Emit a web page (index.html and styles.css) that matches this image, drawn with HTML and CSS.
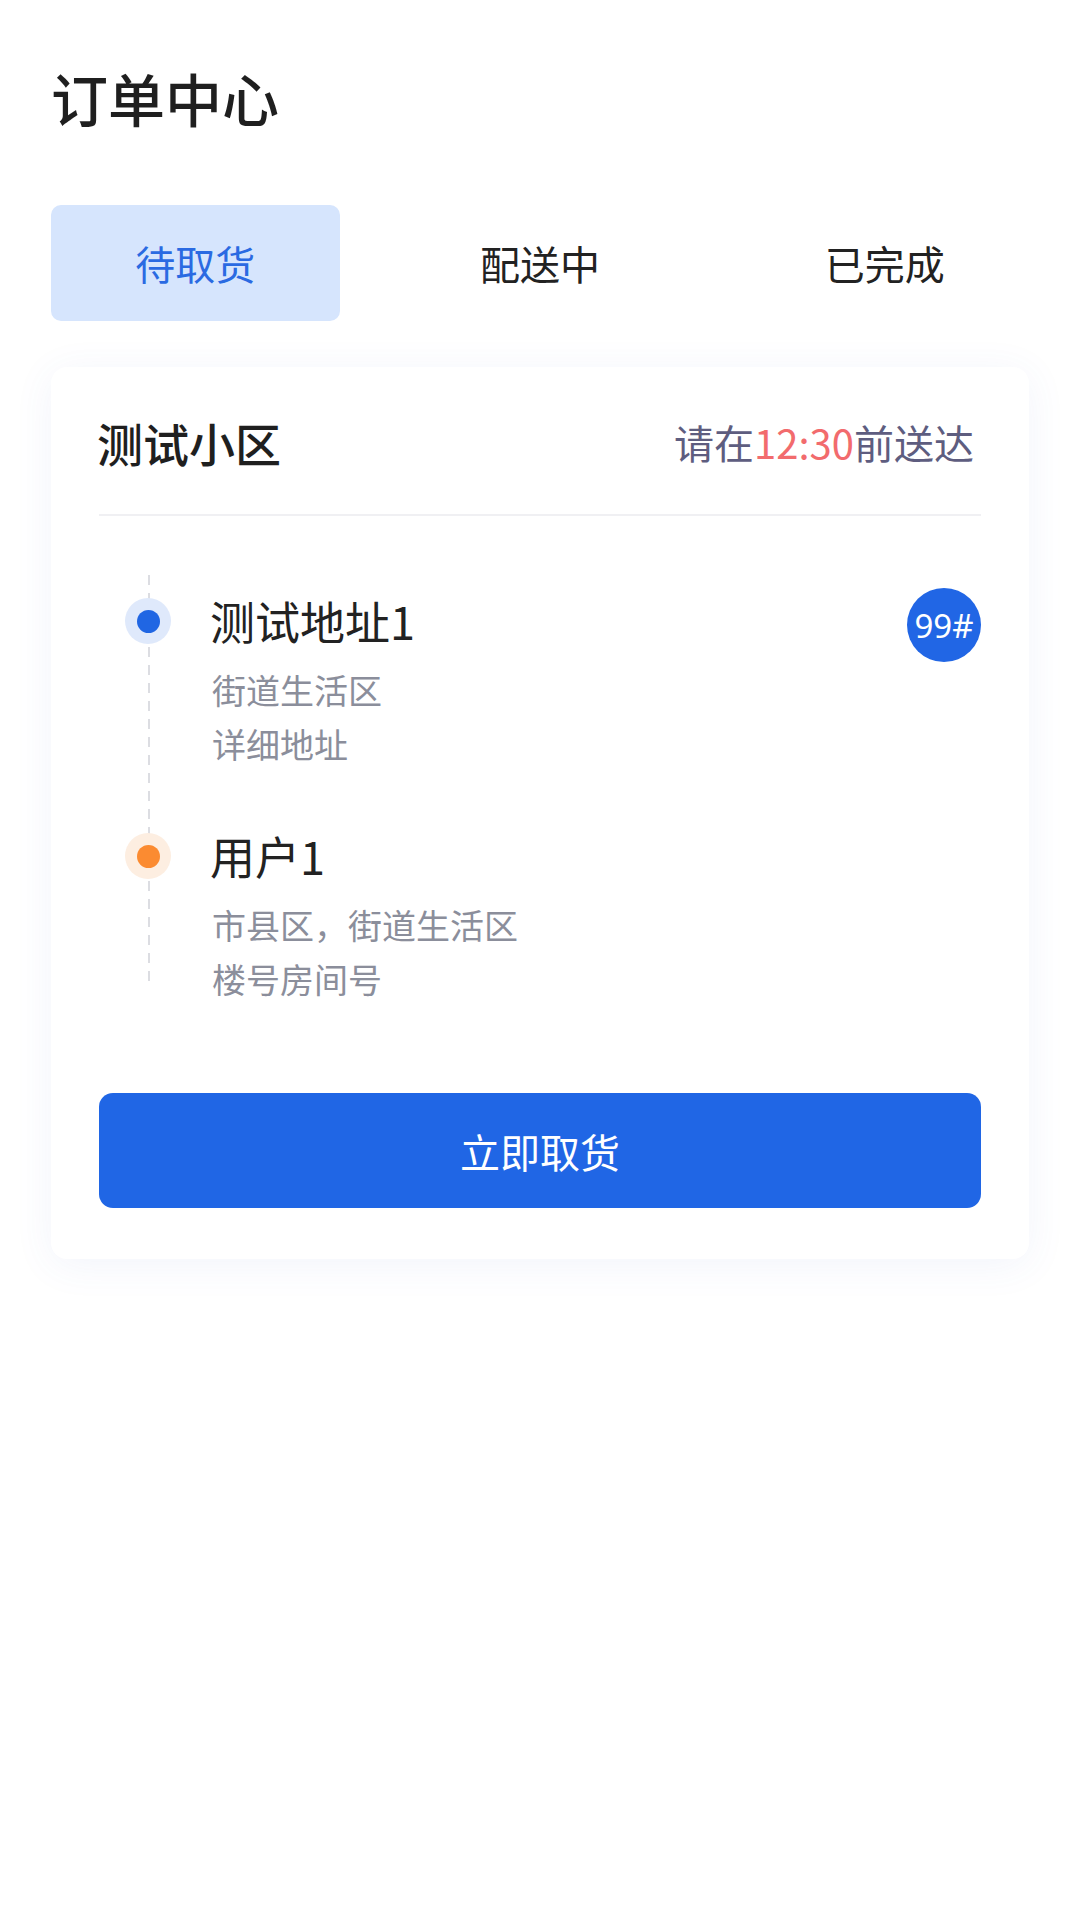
FILE: index.html
```html
<!DOCTYPE html>
<html lang="zh-CN">
<head>
<meta charset="utf-8">
<title>订单中心</title>
<link rel="stylesheet" href="styles.css">
</head>
<body>
<div class="page">
  <h1 class="page-title">订单中心</h1>
  <div class="tabs">
    <div class="tab tab-active">待取货</div>
    <div class="tab">配送中</div>
    <div class="tab">已完成</div>
  </div>
  <div class="card">
    <div class="card-head">
      <div class="card-name">测试小区</div>
      <div class="card-deadline">请在<span class="deadline-time">12:30</span>前送达</div>
    </div>
    <div class="timeline">
      <div class="stop">
        <div class="dot dot-blue"><span></span></div>
        <div class="stop-body">
          <div class="stop-title">测试地址1</div>
          <div class="stop-sub">街道生活区</div>
          <div class="stop-sub">详细地址</div>
        </div>
        <div class="badge">99#</div>
      </div>
      <div class="stop">
        <div class="dot dot-orange"><span></span></div>
        <div class="stop-body">
          <div class="stop-title">用户1</div>
          <div class="stop-sub">市县区，街道生活区</div>
          <div class="stop-sub">楼号房间号</div>
        </div>
      </div>
    </div>
    <button class="action">立即取货</button>
  </div>
</div>
</body>
</html>
```

FILE: styles.css
```css
* { box-sizing: border-box; }
html, body { margin: 0; padding: 0; background: #ffffff; }
body {
  font-family: "Noto Sans CJK SC", "Noto Sans", sans-serif;
  color: #222222;
}
.page {
  width: 1080px;
  min-height: 1920px;
  padding: 57px 51px 0 51px;
}
.page-title {
  margin: 0;
  font-size: 57px;
  line-height: 80px;
  font-weight: 500;
  color: #1f1f1f;
}
.tabs {
  margin-top: 68px;
  display: grid;
  grid-template-columns: repeat(3, 1fr);
  column-gap: 56px;
}
.tab {
  height: 116px;
  display: flex;
  align-items: center;
  justify-content: center;
  font-size: 40px;
  color: #222222;
  border-radius: 10px;
}
.tab-active {
  background: #d6e5fd;
  color: #2a6ae2;
}
.card {
  margin-top: 46px;
  background: #ffffff;
  border-radius: 16px;
  box-shadow: 0 6px 40px rgba(70, 100, 200, 0.07);
  padding: 0 48px 51px 48px;
}
.card-head {
  display: flex;
  justify-content: space-between;
  align-items: center;
  height: 149px;
  padding-top: 2px;
  border-bottom: 2px solid #f0f0f3;
}
.card-name {
  font-size: 46px;
  font-weight: 500;
  color: #1f1f1f;
  margin-left: -2px;
}
.card-deadline {
  font-size: 40px;
  color: #5e5d7f;
  padding-right: 7px;
}
.deadline-time { color: #f26b6d; }
.timeline {
  position: relative;
  padding-top: 77px;
}
.timeline::before {
  content: "";
  position: absolute;
  left: 49px;
  top: 59px;
  bottom: 23px;
  width: 2px;
  background: repeating-linear-gradient(to bottom, #dcdde2 0 10px, transparent 10px 18px);
}
.stop {
  position: relative;
  display: grid;
  grid-template-columns: 113px 1fr auto;
  align-items: start;
}
.stop + .stop { margin-top: 57px; }
.dot {
  margin-left: 26px;
  margin-top: 5px;
  width: 46px;
  height: 46px;
  border-radius: 50%;
  display: flex;
  align-items: center;
  justify-content: center;
}
.dot span {
  width: 23px;
  height: 23px;
  border-radius: 50%;
}
.dot-blue { background: #dfe9fb; }
.dot-blue span { background: #2066e3; }
.dot-orange { background: #fdeee1; }
.dot-orange span { background: #fb8b31; }
.stop-title {
  font-size: 45px;
  line-height: 56px;
  color: #222222;
  margin-bottom: 14px;
  margin-left: -2px;
}
.stop-sub {
  font-size: 34px;
  line-height: 54px;
  color: #8b8e9b;
}
.badge {
  margin-top: -5px;
  width: 74px;
  height: 74px;
  border-radius: 50%;
  background: #2166e5;
  color: #ffffff;
  font-size: 33px;
  display: flex;
  align-items: center;
  justify-content: center;
  font-family: "Noto Sans", "Noto Sans CJK SC", sans-serif;
}
.action {
  display: block;
  width: 100%;
  margin-top: 87px;
  height: 115px;
  border: none;
  border-radius: 14px;
  background: #2066e5;
  color: #ffffff;
  font-family: "Noto Sans CJK SC", "Noto Sans", sans-serif;
  font-size: 40px;
}
```
